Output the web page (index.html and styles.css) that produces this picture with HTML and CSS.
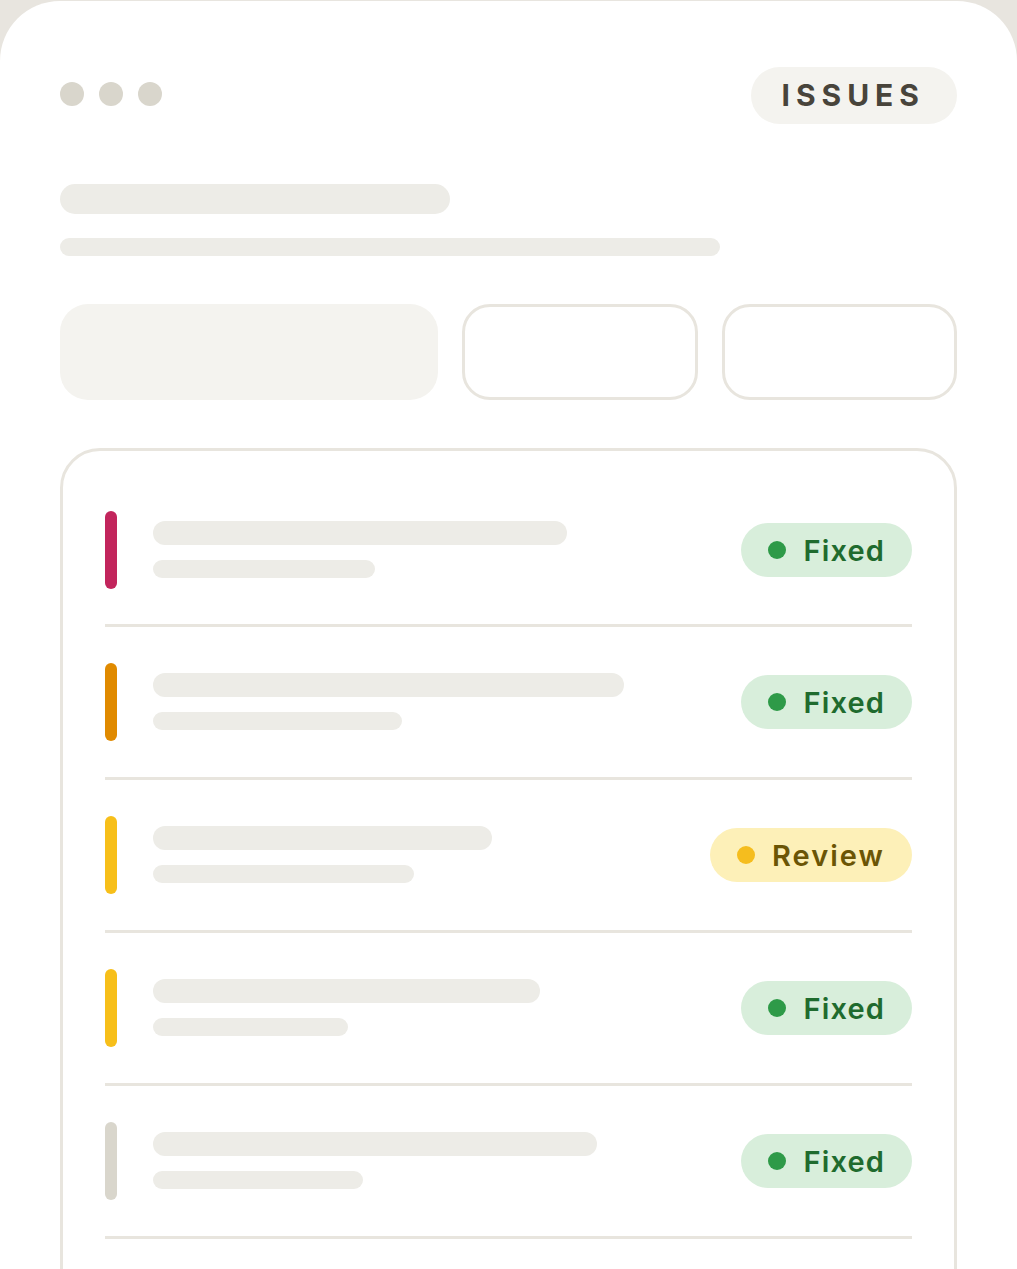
FILE: index.html
```html
<!DOCTYPE html>
<html lang="en">
<head>
  <meta charset="UTF-8" />
  <meta name="viewport" content="width=device-width, initial-scale=1.0"/>
  <title>Issues</title>
  <link rel="stylesheet" href="styles.css">
</head>
<body>
  <div class="panel">
    <div class="header">
      <div class="dots">
        <span class="dot"></span>
        <span class="dot"></span>
        <span class="dot"></span>
      </div>
      <div class="tag">ISSUES</div>
    </div>

    <div class="bar title-bar"></div>
    <div class="bar sub-bar"></div>

    <div class="buttons">
      <div class="btn filled"></div>
      <div class="btn outline"></div>
      <div class="btn outline"></div>
    </div>

    <div class="card">
      <div class="row">
        <div class="mark red"></div>
        <div class="lines">
          <div class="line big" style="width: 414px;"></div>
          <div class="line small" style="width: 222px;"></div>
        </div>
        <div class="badge fixed"><span class="badge-dot"></span>Fixed</div>
      </div>

      <div class="row">
        <div class="mark orange"></div>
        <div class="lines">
          <div class="line big" style="width: 471px;"></div>
          <div class="line small" style="width: 249px;"></div>
        </div>
        <div class="badge fixed"><span class="badge-dot"></span>Fixed</div>
      </div>

      <div class="row">
        <div class="mark yellow"></div>
        <div class="lines">
          <div class="line big" style="width: 339px;"></div>
          <div class="line small" style="width: 261px;"></div>
        </div>
        <div class="badge review"><span class="badge-dot"></span>Review</div>
      </div>

      <div class="row">
        <div class="mark yellow"></div>
        <div class="lines">
          <div class="line big" style="width: 387px;"></div>
          <div class="line small" style="width: 195px;"></div>
        </div>
        <div class="badge fixed"><span class="badge-dot"></span>Fixed</div>
      </div>

      <div class="row">
        <div class="mark grey"></div>
        <div class="lines">
          <div class="line big" style="width: 444px;"></div>
          <div class="line small" style="width: 210px;"></div>
        </div>
        <div class="badge fixed"><span class="badge-dot"></span>Fixed</div>
      </div>
    </div>
  </div>
</body>
</html>
```

FILE: styles.css
```css
* {
  box-sizing: border-box;
}

html, body {
  height: 100%;
}

body {
  margin: 0;
  padding-top: 1px;
  background: #e8e5df;
  font-family: Inter, "Noto Sans", sans-serif;
  overflow: hidden;
}

.panel {
  background: #fff;
  border-radius: 60px 60px 0 0;
  padding: 66px 60px 0 60px;
  min-height: 1400px;
}

.header {
  display: flex;
  justify-content: space-between;
  align-items: center;
}

.dots {
  display: flex;
  gap: 15px;
  margin-bottom: 3px;
}

.dot {
  width: 24px;
  height: 24px;
  border-radius: 50%;
  background: #d9d6cc;
}

.tag {
  height: 57px;
  padding: 0 32px 2px 30px;
  display: flex;
  align-items: center;
  background: #f4f3ef;
  border-radius: 29px;
  color: #48443b;
  font-size: 30px;
  font-weight: 700;
  letter-spacing: 0.2em;
}

.bar {
  background: #edece7;
}

.title-bar {
  width: 390px;
  height: 30px;
  border-radius: 15px;
  margin-top: 60px;
}

.sub-bar {
  width: 660px;
  height: 18px;
  border-radius: 9px;
  margin-top: 24px;
}

.buttons {
  display: grid;
  grid-template-columns: 378px 1fr 1fr;
  gap: 24px;
  margin-top: 48px;
}

.btn {
  height: 96px;
  border-radius: 28px;
}

.btn.filled {
  background: #f4f3ef;
}

.btn.outline {
  border: 3px solid #e8e5de;
}

.card {
  margin-top: 48px;
  border: 3px solid #e8e5de;
  border-radius: 40px;
  padding: 24px 42px 0 42px;
  min-height: 900px;
}

.row {
  display: flex;
  align-items: center;
  padding: 36px 0;
  border-bottom: 3px solid #e8e5de;
}

.row:first-child {
  padding-bottom: 35px;
}

.mark {
  width: 12px;
  height: 78px;
  border-radius: 6px;
  flex-shrink: 0;
}

.mark.red { background: #c2255c; }
.mark.orange { background: #e08a00; }
.mark.yellow { background: #f7bf1a; }
.mark.grey { background: #d9d6cc; }

.lines {
  flex: 1;
  margin-left: 36px;
  display: flex;
  flex-direction: column;
  gap: 15px;
  margin-top: -2px;
}

.line {
  background: #edece7;
}

.line.big {
  height: 24px;
  border-radius: 12px;
}

.line.small {
  height: 18px;
  border-radius: 9px;
}

.badge {
  height: 54px;
  display: flex;
  align-items: center;
  padding: 0 27px;
  border-radius: 27px;
  font-size: 29px;
  font-weight: 600;
  letter-spacing: 0.04em;
}

.badge-dot {
  width: 18px;
  height: 18px;
  border-radius: 50%;
  margin-right: 17px;
}

.badge.fixed {
  background: #d8eedb;
  color: #1f6b2e;
}

.badge.fixed .badge-dot {
  background: #2e9a48;
}

.badge.review {
  background: #fdf0b8;
  color: #6b5505;
  letter-spacing: 0.07em;
}

.badge.review .badge-dot {
  background: #f5bd1e;
}
```
